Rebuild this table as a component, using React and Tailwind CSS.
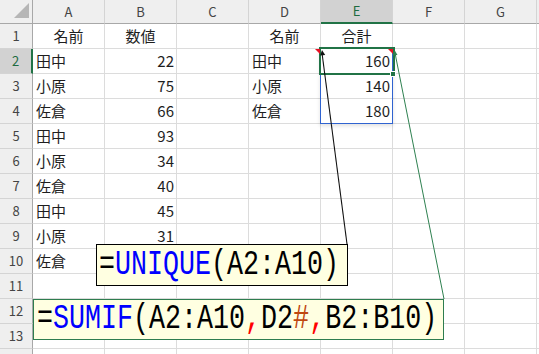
import React from "react";

const COLS = ["A", "B", "C", "D", "E", "F", "G"];

// sheet contents, row 1..14
const ROWS = [
  { A: "名前", B: "数値", D: "名前", E: "合計", head: true },
  { A: "田中", B: 22, D: "田中", E: 160 },
  { A: "小原", B: 75, D: "小原", E: 140 },
  { A: "佐倉", B: 66, D: "佐倉", E: 180 },
  { A: "田中", B: 93 },
  { A: "小原", B: 34 },
  { A: "佐倉", B: 40 },
  { A: "田中", B: 45 },
  { A: "小原", B: 31 },
  { A: "佐倉" },
  {},
  {},
  {},
  {},
];

const Cell = ({ value, head }) => {
  let align = "justify-start pl-[3px]";
  if (head) align = "justify-center";
  else if (typeof value === "number") align = "justify-end pr-[2px]";
  return (
    <div
      className={`w-[72px] shrink-0 h-full flex items-center border-r border-b border-[#dcdcdc] text-[15px] text-[#1e1e1e] ${align}`}
    >
      {value}
    </div>
  );
};

const SheetGrid = () => (
  <div className="flex flex-col font-['Noto_Sans_CJK_JP',sans-serif]">
    {/* column headers */}
    <div className="flex h-[24px] shrink-0">
      <div className="w-[33px] shrink-0 h-full bg-[#efefef] border-r border-b border-[#a8a8a8] flex items-end justify-end pr-[2px] pb-[4px]">
        <svg width="16" height="16" viewBox="0 0 16 16">
          <polygon points="0,15 15,0 15,15" fill="#b6b6b6" />
        </svg>
      </div>
      {COLS.map((c) => (
        <div
          key={c}
          className={`w-[72px] shrink-0 h-full flex items-center justify-center text-[13px] border-r border-[#d4d4d4] ${
            c === "E"
              ? "bg-[#d2d2d2] text-[#1d6b40] border-b-2 border-b-[#217346]"
              : "bg-[#efefef] text-[#444] border-b border-b-[#a8a8a8]"
          }`}
        >
          {c}
        </div>
      ))}
      <div className="flex-1 h-full bg-[#efefef] border-b border-[#a8a8a8]" />
    </div>

    {ROWS.map((r, i) => {
      const n = i + 1;
      const sel = n === 2;
      return (
        <div key={n} className="flex h-[25px] shrink-0">
          <div
            className={`w-[33px] shrink-0 h-full flex items-center justify-center text-[13px] border-b border-[#d4d4d4] ${
              sel
                ? "bg-[#d2d2d2] text-[#1d6b40] border-r-2 border-r-[#217346]"
                : "bg-[#efefef] text-[#444] border-r border-r-[#a8a8a8]"
            }`}
          >
            {n < 14 ? n : null}
          </div>
          {COLS.map((c) => (
            <Cell key={c} value={r[c]} head={r.head} />
          ))}
          <div className="flex-1 h-full border-b border-[#dcdcdc]" />
        </div>
      );
    })}
  </div>
);

export default function App() {
  return (
    <div className="relative w-[539px] h-[354px] overflow-hidden bg-white">
      <SheetGrid />

      {/* spill range E2:E4 */}
      <div className="absolute left-[320px] top-[48px] w-[73px] h-[76px] border border-[#2f63d0] shadow-[0_2px_4px_rgba(0,0,0,0.12)]" />
      {/* active cell E2 */}
      <div className="absolute left-[319px] top-[47px] w-[76px] h-[28px] border-2 border-[#217346]" />
      <div className="absolute left-[390px] top-[71px] w-[6px] h-[6px] bg-[#217346] border border-white" />

      {/* precedent arrows + comment markers */}
      <svg className="absolute inset-0 pointer-events-none" width="539" height="354">
        <polygon points="315,49 320,49 320,54" fill="#e81123" />
        <polygon points="388,49 393,49 393,54" fill="#e81123" />
        <line x1="322" y1="53" x2="347" y2="244" stroke="#111" strokeWidth="1.1" />
        <polygon points="322,50 325.2,55 320.2,55.5" fill="#111" />
        <line x1="395" y1="53" x2="444" y2="299" stroke="#2e8050" strokeWidth="1" />
        <polygon points="394.5,50 397.5,55 392.6,55.6" fill="#2e8050" />
      </svg>

      {/* formula callouts */}
      <div className="absolute left-[96px] top-[244px] w-[252px] h-[42px] border border-black bg-[#ffffe1] flex items-center pl-[2px] overflow-hidden">
        <span className="font-['Liberation_Mono',monospace] text-[35px] leading-none whitespace-nowrap origin-left scale-x-[0.762] text-black">
          =<span className="text-[#0000ff]">UNIQUE</span>(A2:A10)
        </span>
      </div>
      <div className="absolute left-[33px] top-[299px] w-[411px] h-[41px] border border-[#2e7d4f] bg-[#ffffe1] flex items-center pl-[3px] overflow-hidden">
        <span className="font-['Liberation_Mono',monospace] text-[35px] leading-none whitespace-nowrap origin-left scale-x-[0.762] text-black">
          =<span className="text-[#0000ff]">SUMIF</span>(A2:A10<span className="text-[#ff0000]">,</span>D2
          <span className="text-[#c04810]">#</span>
          <span className="text-[#ff0000]">,</span>B2:B10)
        </span>
      </div>
    </div>
  );
}
